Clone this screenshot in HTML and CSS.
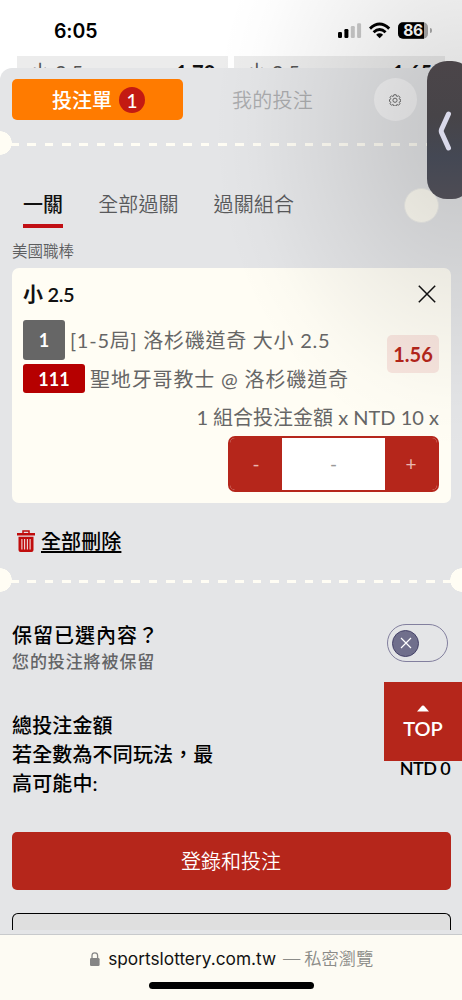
FILE: index.html
```html
<!DOCTYPE html>
<html lang="zh-Hant">
<head>
<meta charset="utf-8">
<meta name="viewport" content="width=device-width, initial-scale=1">
<title>投注單</title>
<link rel="stylesheet" href="styles.css">
</head>
<body>
<div class="phone">
  <header class="status">
    <span class="time">6:05</span>
    <svg class="signals" width="92" height="20" viewBox="0 0 92 20">
      <rect x="1" y="12" width="4" height="6" rx="1.2"/>
      <rect x="7.4" y="9" width="4" height="9" rx="1.2"/>
      <g fill="#c9c9c9"><rect x="13.8" y="6" width="4" height="12" rx="1.2"/><rect x="20.1" y="3.2" width="4" height="14.8" rx="1.2"/></g>
      <g fill="none" stroke="#000" stroke-width="2.9"><path d="M33 8.6Q42.6 -.4 52.2 8.6"/><path d="M36.6 12.3Q42.6 6.8 48.6 12.3"/></g>
      <path d="M42.6 18.2 39.1 14.8Q42.6 11.9 46.1 14.8Z"/>
      <rect x="61" y="2.3" width="30" height="16.5" rx="5" fill="#a9a9a9"/>
      <path d="M66 2.3H87V18.8H66A5 5 0 0 1 61 13.800V7.300A5 5 0 0 1 66 2.300Z"/>
      <text class="battery" x="76" y="16" text-anchor="middle" fill="#fff">86</text>
    </svg>
    <i class="nub"></i>
  </header>
  <div class="odds-strip">
    <div class="odds"><span>小 2.5</span><b>1.70</b></div>
    <div class="odds"><span>小 2.5</span><b>1.65</b></div>
  </div>

  <main class="sheet">
    <nav class="switcher">
      <div class="slip">投注單<span class="count">1</span></div>
      <div class="mine">我的投注</div>
      <div class="settings">
        <svg width="12" height="12" viewBox="0 0 24 24" fill="none" stroke="#6d6d6d" stroke-width="2" stroke-linejoin="round"><path d="M9.700 1.500h4.600l.8 3 1.200.5 2.700-1.500 3 3-1.500 2.800.5 1.200 2.500.7v3.600l-2.500.8-.5 1.200 1.500 2.700-3 3-2.700-1.500-1.200.5-.8 2.500h-4.600l-.8-2.500-1.200-.5L5 22.500l-3-3 1.500-2.700-.5-1.200-2-.8v-3.600l2-.7.5-1.200L2 6.500l3-3L7.700 5l1.200-.5z"/><circle cx="12" cy="12.500" r="4.200"/></svg>
      </div>
    </nav>
    <div class="tear"></div>
    <nav class="tabs"><span class="tab active">一關</span><span class="tab">全部過關</span><span class="tab">過關組合</span></nav>
    <div class="league">美國職棒</div>

    <section class="card">
      <div class="card-head">
        <h2>小 2.5</h2>
        <svg width="18" height="18" viewBox="0 0 18 18" stroke="#111" stroke-width="1.500" fill="none"><path d="M.8.8 17.200 17.200M17.200.8.8 17.200"/></svg>
      </div>
      <div class="match">
        <div class="lines">
          <div class="line first"><span class="tag gray">1</span><span class="event">[1-5局] 洛杉磯道奇 大小 2.5</span></div>
          <div class="line second"><span class="tag red">111</span><span>聖地牙哥教士 @ 洛杉磯道奇</span></div>
        </div>
        <div class="price">1.56</div>
      </div>
      <div class="stake">1 組合投注金額 x NTD 10 x</div>
      <div class="stepper"><span class="step">-</span><span class="value">-</span><span class="step plus">+</span></div>
    </section>

    <div class="clear">
      <svg width="18" height="22" viewBox="0 0 18 22"><path d="M6 3V.9h6V3" fill="none" stroke="#c00d0d" stroke-width="1.500"/><path d="M0 3h18v2.400H0zM1.500 6.800h15V20q0 2-2 2h-11q-2 0-2-2z" fill="#c00d0d"/><path d="M4.900 9v10.500M7.600 9v10.500M10.400 9v10.500M13.100 9v10.500" stroke="#f0dada" stroke-width="1.100"/></svg>
      <span>全部刪除</span>
    </div>
    <div class="tear full"></div>

    <section class="keep">
      <div><h3>保留已選內容？</h3><p>您的投注將被保留</p></div>
      <div class="toggle"><span class="knob"><svg width="12" height="12" viewBox="0 0 12 12" stroke="#fff" stroke-width="1.200"><path d="M1 1 11 11M11 1 1 11"/></svg></span></div>
    </section>

    <section class="totals">
      <div class="total-label">總投注金額<br>若全數為不同玩法，最高可能中:</div>
      <div class="total-value">NTD 0</div>
    </section>
    <button class="login">登錄和投注</button>
    <div class="outline"></div>
  </main>

  <footer class="browser">
    <div class="address">
      <svg width="10" height="14" viewBox="0 0 10 14"><rect x="0" y="6" width="9.600" height="8" rx="1.300" fill="#858585"/><path d="M2 6.500V3.800Q2 .8 4.800 .8T7.600 3.800V6.500" fill="none" stroke="#858585" stroke-width="1.300"/></svg>
      <span class="host">sportslottery.com.tw</span><span class="mode">— 私密瀏覽</span>
    </div>
    <div class="home"></div>
  </footer>

  <div class="to-top"><svg width="12" height="7" viewBox="0 0 12 7"><path d="M0 6.500 5 .8Q6 0 7 .8L12 6.500Z" fill="#fff"/></svg><span>TOP</span></div>
  <div class="dot"></div>
  <div class="shade"></div>
  <div class="drawer"><svg width="14" height="40" viewBox="0 0 14 40" fill="none" stroke="#d9d9ea" stroke-width="5" stroke-linecap="round" stroke-linejoin="round"><path d="M10.500 3 3.500 18.500Q3 20 3.500 21.500L10.500 37"/></svg></div>
</div>
</body>
</html>
```
FILE: styles.css
```css
* { box-sizing: border-box; }
body { margin: 0; font-family: Lato, "Noto Sans CJK TC", sans-serif; }
h2, h3, p { margin: 0; }
.phone { position: relative; width: 462px; height: 1000px; overflow: hidden; background: #fff; display: flex; flex-direction: column; }
.status { height: 56px; flex: none; display: flex; align-items: flex-start; padding: 20px 33px 0 54px; }
.time { flex: 1; font: 600 19.5px/22px Inter, sans-serif; letter-spacing: -.1px; }
.battery { font: 700 15.5px Inter, sans-serif; letter-spacing: -.3px; }
.nub { width: 1.5px; height: 5px; margin: 8px -2.5px 0 1px; border-radius: 0 2px 2px 0; background: #aaa; }
.odds-strip { height: 12px; flex: none; display: flex; gap: 5.5px; padding: 0 17px; overflow: hidden; }
.odds { flex: 1; height: 40px; padding: 4px 13px 0; background: #ececec; display: flex; justify-content: space-between; font-size: 20px; line-height: 24px; color: #555; }
.odds b { color: #111; font-weight: 700; }

.sheet { height: 866px; flex: none; background: #e4e5e7; border-radius: 12px 0 0 0; padding-top: 10px; overflow: hidden; display: flex; flex-direction: column; }
.switcher { height: 43px; flex: none; padding-left: 11.5px; display: flex; align-items: center; font-size: 20px; }
.slip { width: 171px; height: 41px; border-radius: 5px; background: #ff7b00; color: #fff; display: flex; align-items: center; justify-content: center; gap: 7px; font-weight: 500; padding-left: 3px; }
.count { width: 26px; height: 26px; border-radius: 50%; background: #c31a12; text-align: center; line-height: 27px; font-size: 19px; }
.mine { width: 180px; text-align: center; color: #aaabad; font-weight: 350; letter-spacing: .2px; }
.settings { width: 43px; height: 43px; margin-left: 11px; border-radius: 50%; background: #f3f3f4; display: flex; align-items: center; justify-content: center; }
.tear { height: 24px; margin-top: 10px; flex: none; background:
  radial-gradient(circle at 0 12px, #fffdf4 11.5px, transparent 12px),
  repeating-linear-gradient(90deg, #fffdf4 0 8.7px, transparent 8.7px 17.33px) 10.2px 12px / 462px 3px no-repeat; }
.full { margin-top: 14px; background:
  radial-gradient(circle at 0 12px, #fffdf4 11.5px, transparent 12px),
  radial-gradient(circle at 462px 12px, #fffdf4 11.5px, transparent 12px),
  repeating-linear-gradient(90deg, #fffdf4 0 8.7px, transparent 8.7px 17.33px) 10.2px 11.5px / 462px 3px no-repeat; }
.tabs { margin-top: 33px; height: 40px; flex: none; padding-left: 23px; display: flex; gap: 35px; font-size: 20px; line-height: 32px; color: #58595b; font-weight: 350; letter-spacing: .1px; }
.tab { height: 40px; }
.tab.active { color: #111; font-weight: 500; border-bottom: 4.5px solid #c10f14; }
.league { margin-top: 12px; height: 22px; flex: none; padding-left: 12px; font-size: 15.5px; line-height: 22px; color: #5c5d5f; font-weight: 350; }

.card { margin: 6px 11.5px 0; height: 235px; flex: none; border-radius: 7px; background: #fffdf4; padding: 13px 11.5px 0; display: flex; flex-direction: column; color: #666; }
.card-head { height: 26px; flex: none; display: flex; align-items: center; justify-content: space-between; padding-right: 3px; }
.card-head h2 { font-size: 20px; line-height: 26px; color: #111; font-weight: 600; letter-spacing: -.3px; }
.match { margin-top: 13px; height: 74px; flex: none; display: flex; justify-content: space-between; align-items: flex-start; }
.lines { white-space: nowrap; font-size: 20px; font-weight: 400; letter-spacing: .85px; }
.line { display: flex; align-items: center; gap: 5px; }
.event { margin-top: -2px; letter-spacing: .75px; }
.first { height: 40px; }
.second { height: 29px; margin-top: 4px; }
.tag { border-radius: 3px; color: #fff; font-weight: 700; font-size: 18px; display: flex; align-items: center; justify-content: center; letter-spacing: 0; }
.gray { width: 42px; height: 40px; background: #666; }
.red { width: 62px; height: 29px; background: #b60000; }
.price { margin-top: 15px; width: 52px; height: 38px; border-radius: 5px; background: #f8e5de; color: #b5261b; font-weight: 700; font-size: 20px; line-height: 38px; text-align: center; }
.stake { height: 42px; flex: none; text-align: right; font-size: 20px; line-height: 46px; font-weight: 400; white-space: nowrap; }
.stepper { align-self: flex-end; width: 211px; height: 56px; flex: none; border: 2px solid #b5261b; border-radius: 7px; background: #fff; overflow: hidden; display: flex; font-size: 19px; line-height: 52px; text-align: center; }
.step { width: 52px; background: #b5261b; color: #eab7b1; }
.value { flex: 1; color: #999; }

.clear { margin-top: 25px; height: 26px; flex: none; padding-left: 17px; display: flex; align-items: center; gap: 6px; font-size: 20px; font-weight: 500; color: #000; letter-spacing: .1px; }
.clear span { margin-top: -2px; text-decoration: underline; text-decoration-thickness: 1.5px; text-underline-offset: 2px; }
.keep { margin-top: 30px; height: 50px; flex: none; padding: 0 14px 0 12px; display: flex; justify-content: space-between; white-space: nowrap; }
.keep h3 { font-size: 20px; line-height: 26px; font-weight: 500; letter-spacing: 1px; color: #000; }
.keep p { font-size: 17px; line-height: 27px; font-weight: 500; letter-spacing: .9px; color: #636466; }
.toggle { width: 61px; height: 38px; margin-top: 2px; border: 1.5px solid #827f9e; border-radius: 19px; padding: 4.5px 4px; display: flex; }
.knob { width: 27px; height: 27px; border-radius: 50%; background: #706f8c; border: 1.5px solid #464369; display: flex; align-items: center; justify-content: center; }
.totals { margin-top: 39px; height: 87px; flex: none; padding: 0 12px; display: flex; justify-content: space-between; align-items: flex-start; font-size: 20px; line-height: 29px; font-weight: 500; color: #000; }
.total-label { width: 208px; letter-spacing: .15px; }
.total-value { margin-top: 43px; font-size: 18px; font-weight: 600; letter-spacing: -.6px; }
.login { margin: 34px 11.5px 0; height: 58px; flex: none; border: 0; border-radius: 5px; background: #b5261b; color: #fff; font: 350 20px/58px Lato, "Noto Sans CJK TC", sans-serif; padding: 0; }
.outline { margin: 23px 11.5px 0; height: 17px; flex: none; border: 1.5px solid #000; border-bottom: 0; border-radius: 6px 6px 0 0; background: #dfdfdf; }

.browser { height: 66px; flex: none; background: #fdfbf3; border-top: 1px solid #c8cacc; display: flex; flex-direction: column; align-items: center; }
.address { height: 47px; padding-left: 1px; display: flex; align-items: center; white-space: nowrap; font: 400 17.3px/45px Inter, "Noto Sans CJK TC", sans-serif; }
.host { margin-left: 8.5px; color: #111; }
.mode { margin-left: 7px; color: #8b8b88; font-weight: 350; word-spacing: -1px; }
.home { width: 165px; height: 7px; border-radius: 4px; background: #000; }

.to-top { position: absolute; right: 0; top: 682px; width: 78px; height: 79px; background: #b5261b; color: #fff; display: flex; flex-direction: column; align-items: center; padding-top: 23px; font-size: 20px; line-height: 32px; font-weight: 600; }
.dot { position: absolute; left: 404px; top: 188px; width: 35px; height: 35px; border-radius: 50%; background: #fffdf4; border: 1px solid #eeeeeb; }
.shade { position: absolute; left: 182px; top: 0; width: 280px; height: 500px; background: radial-gradient(ellipse 250px 320px at 280px 130px, rgba(0,0,0,.14), rgba(0,0,0,.105) 25%, rgba(0,0,0,.05) 58%, rgba(0,0,0,.012) 85%, transparent); }
.drawer { position: absolute; left: 427px; top: 60.5px; width: 45px; height: 138.5px; border-radius: 20px; background: linear-gradient(#4b4549, #474448 40%, #444854 70%, #4e4c54); padding: 50px 0 0 11px; }
```
